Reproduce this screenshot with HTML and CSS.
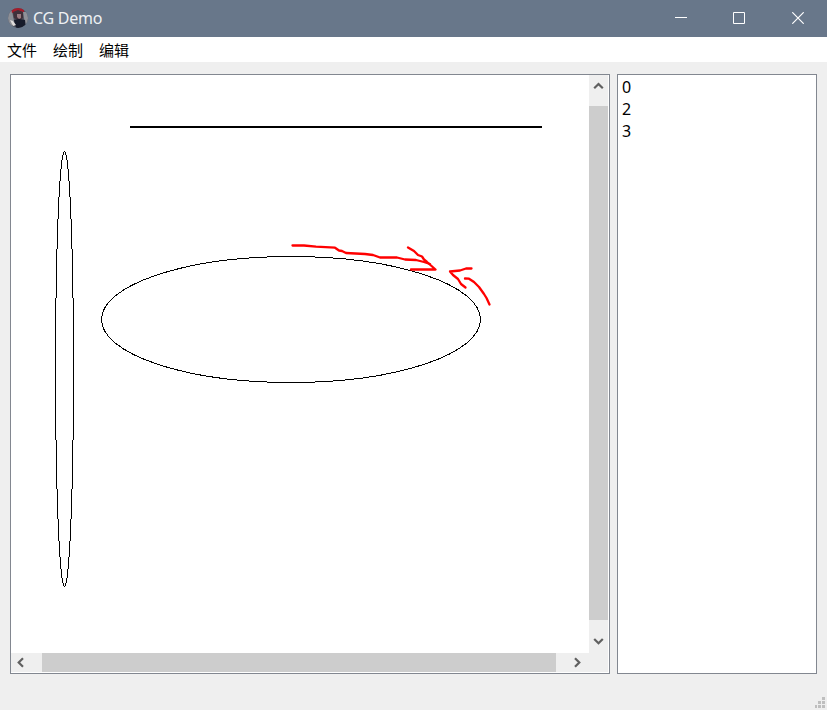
FILE: index.html
```html
<!DOCTYPE html>
<html lang="zh">
<head>
<meta charset="utf-8">
<title>CG Demo</title>
<link rel="stylesheet" href="styles.css">
</head>
<body>
<div class="window">
  <header class="titlebar">
    <svg class="avatar" viewBox="0 0 20 20">
      <defs><clipPath id="round"><circle cx="10" cy="10" r="10"/></clipPath></defs>
      <g clip-path="url(#round)">
        <rect width="20" height="20" fill="#50535e"/>
        <path d="M0 3h4l2 10-2 5H0z" fill="#8d8f96"/>
        <path d="M15 4h5v12h-3z" fill="#8f9198"/>
        <path d="M3 0h13v4l-6-1-6 2z" fill="#a51c2b"/>
        <path d="M5 4l5-2 5 2v6l-4 3-5-3z" fill="#40303a"/>
        <path d="M9 6h4v4l-2 1-2-2z" fill="#9a7b80"/>
        <path d="M6 12l5-1 6 1 1 8H8z" fill="#171b2a"/>
        <path d="M2 12l3 1 3 4-3 1z" fill="#e0dddc"/>
      </g>
    </svg>
    <span class="title">CG Demo</span>
    <div class="controls">
      <svg viewBox="0 0 12 12"><path d="M0 5.500h12"/></svg>
      <svg viewBox="0 0 12 12"><path d="M.5 .5h11v11H.5z"/></svg>
      <svg class="close" viewBox="0 0 12 12"><path d="M.3 .3l11.4 11.4M11.7 .3L.3 11.7"/></svg>
    </div>
  </header>
  <nav class="menu"><span>文件</span><span>绘制</span><span>编辑</span></nav>
  <main class="content">
    <section class="view">
      <svg class="canvas" viewBox="11 75 578 578">
        <g class="shapes">
          <path class="segment" d="M130 127H542"/>
          <path d="M64.5 151v1M63.5 152v3M62.5 155v5M61.5 160v9M60.5 169v12M59.5 181v16M58.5 197v22M57.5 219v30M56.5 249v49M55.5 298v142M56.5 440v49M57.5 489v30M58.5 519v22M59.5 541v16M60.5 557v12M61.5 569v9M62.5 578v5M63.5 583v3M64.5 586v1M65.5 583v3M66.5 578v5M67.5 569v9M68.5 557v12M69.5 541v16M70.5 519v22M71.5 489v30M72.5 440v49M73.5 298v142M72.5 249v49M71.5 219v30M70.5 197v22M69.5 181v16M68.5 169v12M67.5 160v9M66.5 155v5M65.5 152v3"/>
          <ellipse cx="291" cy="319.5" rx="189.5" ry="63"/>
        </g>
        <g class="marks">
          <path d="M292.500 245.500L304 245.500L316 246.700L335 247.700L339 250.500L342 251L346 253L365 254L373 255L380 257.500L397 257.500L405 259.500L416 260L424 262L430 264"/>
          <path d="M408 247.500L414 251L418 255L422 256.500L424 259.500L427 262L435.500 269.500L411 269.500"/>
          <path d="M471.500 268.500L466 268.500L460 270.500L450 271.500L453 275L458 279L461 284L465.500 287.500"/>
          <path d="M465 278.500L469 278.700L474 282L479 287L484 294L486.500 298L489.500 304.500"/>
        </g>
      </svg>
      <div class="bar vertical">
        <svg viewBox="0 0 19 31"><path d="M5.200 13.300L9.500 9L13.800 13.300"/></svg>
        <i class="thumb"></i>
        <svg viewBox="0 0 19 33"><path d="M5.200 19L9.500 23.300L13.800 19"/></svg>
      </div>
      <div class="bar horizontal">
        <svg viewBox="0 0 31 19"><path d="M12 5.200L7.700 9.500L12 13.800"/></svg>
        <i class="thumb"></i>
        <svg viewBox="0 0 33 19"><path d="M19 5.200L23.300 9.500L19 13.800"/></svg>
      </div>
      <div class="corner"></div>
    </section>
    <ul class="list"><li>0</li><li>2</li><li>3</li></ul>
  </main>
  <footer class="status">
    <svg class="grip" viewBox="0 0 11 11"><path d="M7 0h3v3H7zM3 4h3v3H3zM7 4h3v3H7zM0 8h2v3H0zM3 8h3v3H3zM7 8h3v3H7z"/></svg>
  </footer>
</div>
</body>
</html>
```
FILE: styles.css
```css
* { box-sizing: border-box; }
body { margin: 0; overflow: hidden; font-family: "Noto Sans", "Noto Sans CJK SC", sans-serif; color: #000; }
svg { display: block; fill: none; }
.window { width: 827px; height: 710px; display: flex; flex-direction: column; background: #efefef; }
.titlebar { height: 37px; flex: none; display: flex; align-items: center; padding: 0 23px 1px 8px; background: #68778a; color: #fff; }
.avatar { width: 20px; height: 20px; }
.title { margin-left: 5px; font: 16px/22px "Noto Sans", sans-serif; letter-spacing: -.25px; color: #eef1f4; }
.controls { margin-left: auto; display: flex; gap: 46px; }
.controls svg { width: 12px; height: 12px; stroke: #fff; stroke-width: 1; }
.controls .close { margin-left: 1px; stroke-width: 1.2; }
.menu { height: 25px; flex: none; display: flex; gap: 16px; padding-left: 7px; background: #fff; font: 15px/25px "Noto Sans CJK SC", sans-serif; }
.content { display: flex; gap: 7px; padding: 12px 10px 0; }
.view { width: 600px; height: 600px; display: grid; grid-template: 578px 19px / 578px 19px; border: 1px solid #828790; background: #fff; }
.canvas { width: 578px; height: 578px; }
.shapes { stroke: #000; stroke-width: 1; shape-rendering: crispEdges; }
.segment { stroke-width: 2; }
.marks { stroke: #f00; stroke-width: 2.3; stroke-linecap: round; stroke-linejoin: round; }
.bar { display: flex; background: #efefef; }
.bar path { stroke: #606060; stroke-width: 2.2; }
.vertical { flex-direction: column; }
.vertical svg { width: 19px; }
.horizontal svg { height: 19px; }
.thumb { flex: 1; background: #cdcdcd; }
.corner { background: #efefef; }
.list { width: 200px; height: 600px; margin: 0; padding: 1px 4px; border: 1px solid #828790; background: #fff; list-style: none; font: 16px/22px "Noto Sans", sans-serif; }
.status { flex: 1; display: flex; align-items: flex-end; justify-content: flex-end; padding: 0 1px 2px 0; }
.grip { width: 11px; height: 11px; fill: #bfbfbf; }
```
